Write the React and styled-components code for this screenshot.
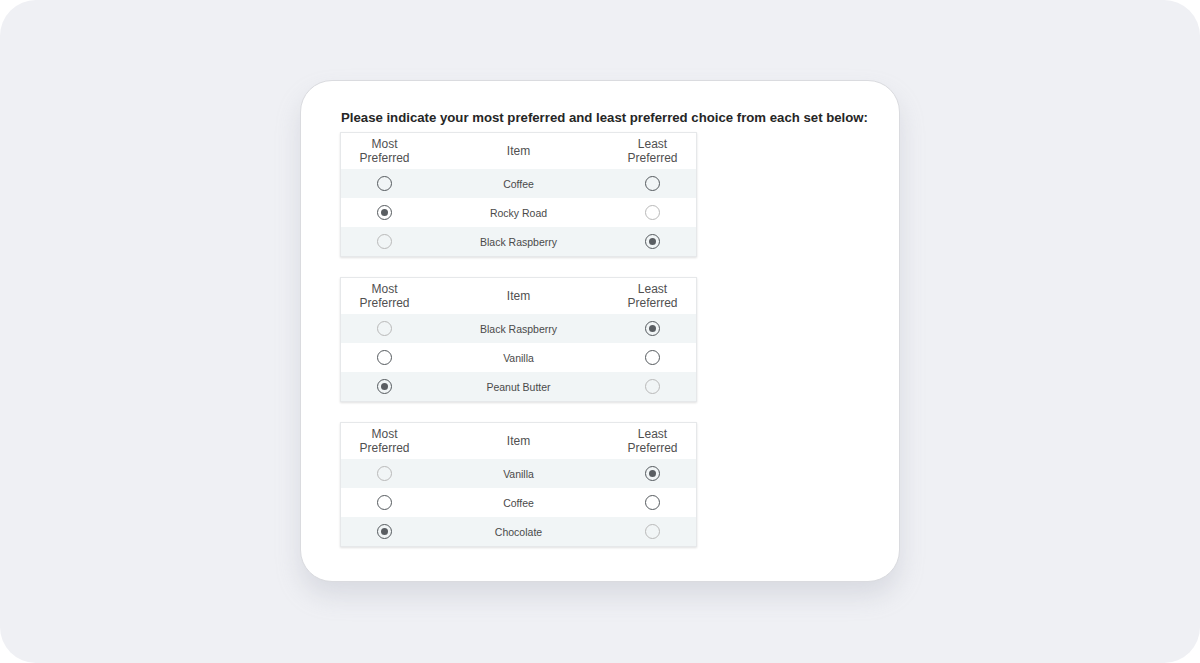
import React from 'react';
import styled, { createGlobalStyle } from 'styled-components';

const Global = createGlobalStyle`
	html, body { margin: 0; padding: 0; background: #ffffff; }
	body { font-family: "Liberation Sans", Arial, Helvetica, sans-serif; }
`;

const sets = [
	[
		{ item: 'Coffee', most: 'open', least: 'open' },
		{ item: 'Rocky Road', most: 'checked', least: 'faded' },
		{ item: 'Black Raspberry', most: 'faded', least: 'checked' },
	],
	[
		{ item: 'Black Raspberry', most: 'faded', least: 'checked' },
		{ item: 'Vanilla', most: 'open', least: 'open' },
		{ item: 'Peanut Butter', most: 'checked', least: 'faded' },
	],
	[
		{ item: 'Vanilla', most: 'faded', least: 'checked' },
		{ item: 'Coffee', most: 'open', least: 'open' },
		{ item: 'Chocolate', most: 'checked', least: 'faded' },
	],
];

const Backdrop = styled.div`
	width: 1200px;
	height: 663px;
	background: #eff0f4;
	border-radius: 36px;
	display: flex;
	justify-content: center;
	align-items: flex-start;
	padding-top: 80px;
	box-sizing: border-box;
`;

const Card = styled.div`
	width: 600px;
	height: 502px;
	box-sizing: border-box;
	background: #ffffff;
	border: 1px solid #dadbdf;
	border-radius: 32px;
	box-shadow: 0 14px 24px rgba(160, 166, 178, 0.28);
	padding: 28px 0 0 39px;
`;

const Title = styled.h1`
	margin: 0 0 5px 1px;
	font-size: 13.2px;
	line-height: 18px;
	font-weight: 700;
	color: #262626;
	white-space: nowrap;
`;

const Table = styled.div`
	width: 357px;
	box-sizing: border-box;
	border: 1px solid #e6e8ea;
	box-shadow: 0 1px 2px rgba(0, 0, 0, 0.12);
	margin-bottom: 20px;
	display: grid;
	grid-template-columns: 87px 181px 87px;
`;

const Head = styled.div`
	height: 36px;
	display: flex;
	align-items: center;
	justify-content: center;
	text-align: center;
	font-size: 12px;
	line-height: 14.5px;
	color: #505050;
	background: #ffffff;
`;

const Cell = styled.div`
	height: 29px;
	display: flex;
	align-items: center;
	justify-content: center;
	font-size: 10.5px;
	color: #4a4a4a;
	background: ${(p) => (p.$alt ? '#f1f5f6' : '#ffffff')};
`;

const Radio = styled.span`
	width: 15px;
	height: 15px;
	box-sizing: border-box;
	border-radius: 50%;
	border: 1.5px solid ${(p) => (p.$kind === 'faded' ? '#b9b9b9' : '#555a5e')};
	display: flex;
	align-items: center;
	justify-content: center;
	&::after {
		content: '';
		width: 7px;
		height: 7px;
		border-radius: 50%;
		background: #5a5e62;
		display: ${(p) => (p.$kind === 'checked' ? 'block' : 'none')};
	}
`;

function ChoiceSet({ rows }) {
	return (
		<Table>
			<Head>Most<br />Preferred</Head>
			<Head>Item</Head>
			<Head>Least<br />Preferred</Head>
			{rows.map((r, i) => (
				<React.Fragment key={i}>
					<Cell $alt={i % 2 === 0}><Radio $kind={r.most} /></Cell>
					<Cell $alt={i % 2 === 0}>{r.item}</Cell>
					<Cell $alt={i % 2 === 0}><Radio $kind={r.least} /></Cell>
				</React.Fragment>
			))}
		</Table>
	);
}

export default function App() {
	return (
		<>
			<Global />
			<Backdrop>
				<Card>
					<Title>Please indicate your most preferred and least preferred choice from each set below:</Title>
					{sets.map((rows, i) => (
						<ChoiceSet key={i} rows={rows} />
					))}
				</Card>
			</Backdrop>
		</>
	);
}
